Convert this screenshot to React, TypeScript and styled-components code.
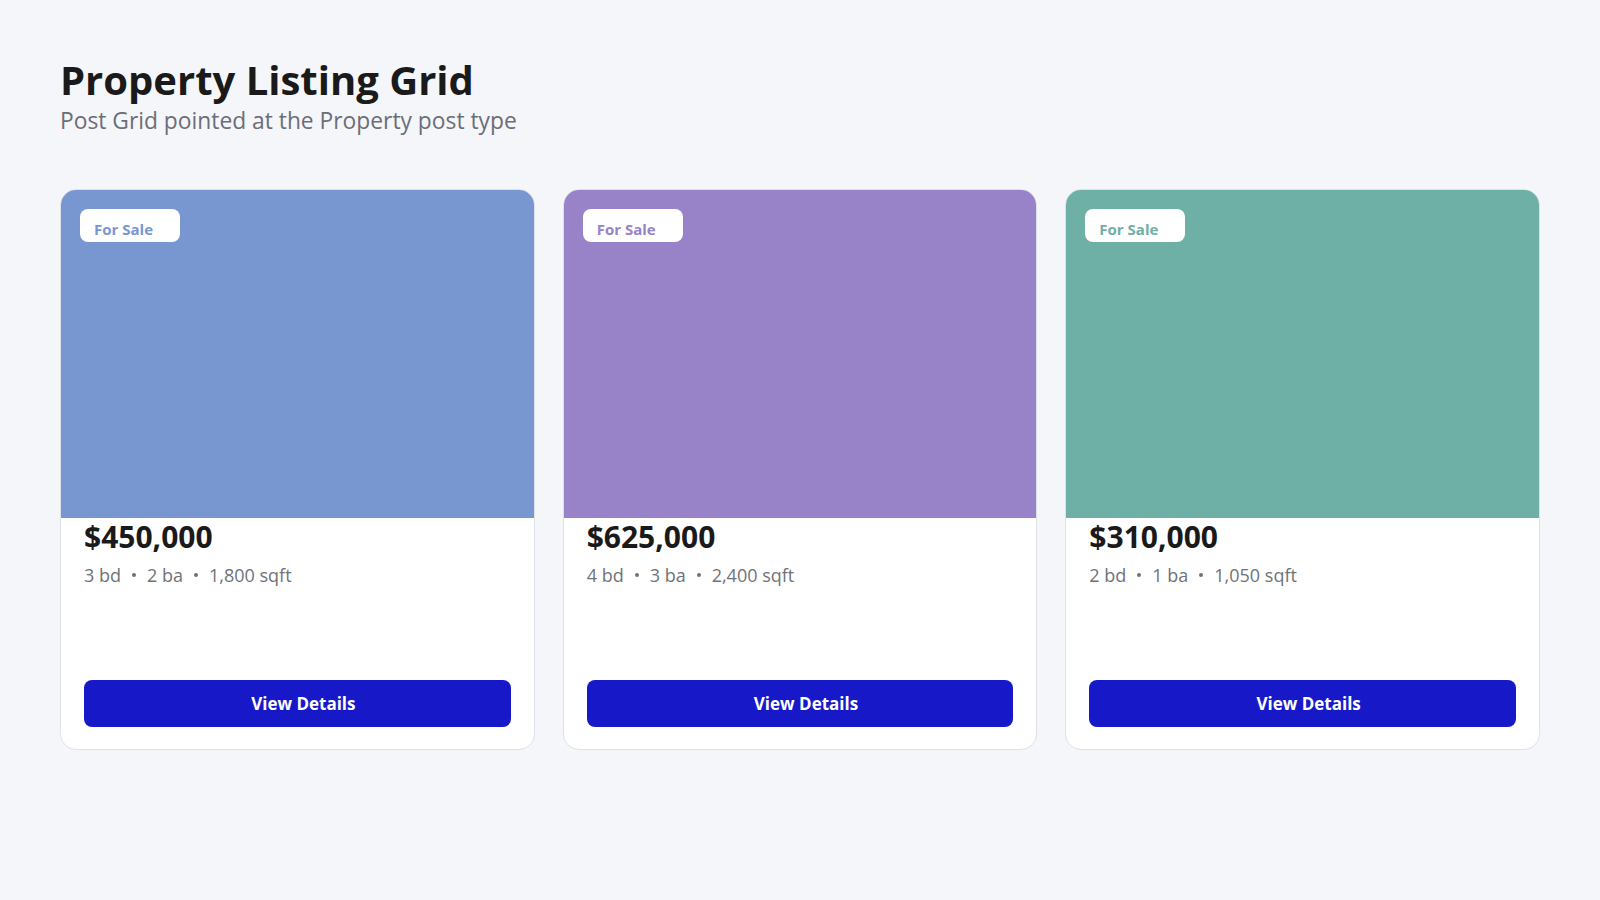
import React from "react";
import styled, { createGlobalStyle } from "styled-components";

interface IProperty {
  id: number;
  price: string;
  beds: number;
  baths: number;
  sqft: string;
  status: string;
  tint: string;
}

const properties: IProperty[] = [
  { id: 1, price: "$450,000", beds: 3, baths: 2, sqft: "1,800", status: "For Sale", tint: "#7897d1" },
  { id: 2, price: "$625,000", beds: 4, baths: 3, sqft: "2,400", status: "For Sale", tint: "#9882c8" },
  { id: 3, price: "$310,000", beds: 2, baths: 1, sqft: "1,050", status: "For Sale", tint: "#6eafa6" },
];

const GlobalStyle = createGlobalStyle`
  * {
    box-sizing: border-box;
  }

  body {
    margin: 0;
    background: #f5f6fa;
    font-family: "Open Sans", "Noto Sans", sans-serif;
    color: #1a1a1a;
  }
`;

const Page = styled.main`
  padding: 56px 60px 60px;
`;

const Header = styled.header`
  margin-bottom: 52px;
`;

const Title = styled.h1`
  margin: 0;
  font-size: 40px;
  line-height: 1.2;
  font-weight: 700;
  color: #1a1a1a;
`;

const Subtitle = styled.p`
  margin: 2px 0 0;
  font-size: 22.8px;
  line-height: 1.35;
  color: #6b6e78;
`;

const Grid = styled.section`
  display: grid;
  grid-template-columns: repeat(3, 1fr);
  gap: 28px;
`;

const Card = styled.article`
  height: 561px;
  display: flex;
  flex-direction: column;
  background: #ffffff;
  border: 1px solid #dfe1ea;
  border-radius: 16px;
  overflow: hidden;
`;

const Media = styled.div<{ tint: string }>`
  position: relative;
  height: 329px;
  margin: -1px -1px 0;
  background: ${(props) => props.tint};
  border-radius: 16px 16px 0 0;
`;

const Badge = styled.span<{ tint: string }>`
  position: absolute;
  top: 20px;
  left: 20px;
  width: 100px;
  height: 33px;
  padding: 10px 0 0 14px;
  background: #ffffff;
  border-radius: 8px;
  font-size: 15px;
  line-height: 20px;
  font-weight: 700;
  color: ${(props) => props.tint};
`;

const Body = styled.div`
  flex: 1;
  display: flex;
  flex-direction: column;
  padding: 1px 23px 22px;
`;

const Price = styled.h2`
  margin: 0;
  font-size: 30px;
  line-height: 1.2;
  font-weight: 700;
  color: #1a1a1a;
`;

const Specs = styled.div`
  display: flex;
  align-items: center;
  gap: 11px;
  margin-top: 8px;
  font-size: 18px;
  color: #70727b;
`;

const Dot = styled.span`
  width: 4px;
  height: 4px;
  border-radius: 50%;
  background: #70727b;
`;

const Button = styled.button`
  margin-top: auto;
  height: 47px;
  width: 100%;
  padding: 0 0 0 12px;
  border: none;
  border-radius: 8px;
  background: #1719c8;
  color: #ffffff;
  font-family: inherit;
  font-size: 17px;
  font-weight: 700;
  cursor: pointer;
`;

const PropertyCard: React.FC<{ property: IProperty }> = ({ property }) => (
  <Card>
    <Media tint={property.tint}>
      <Badge tint={property.tint}>{property.status}</Badge>
    </Media>
    <Body>
      <Price>{property.price}</Price>
      <Specs>
        <span>{property.beds} bd</span>
        <Dot />
        <span>{property.baths} ba</span>
        <Dot />
        <span>{property.sqft} sqft</span>
      </Specs>
      <Button>View Details</Button>
    </Body>
  </Card>
);

const App: React.FC = () => (
  <>
    <GlobalStyle />
    <Page>
      <Header>
        <Title>Property Listing Grid</Title>
        <Subtitle>Post Grid pointed at the Property post type</Subtitle>
      </Header>
      <Grid>
        {properties.map((p) => (
          <PropertyCard key={p.id} property={p} />
        ))}
      </Grid>
    </Page>
  </>
);

export default App;
